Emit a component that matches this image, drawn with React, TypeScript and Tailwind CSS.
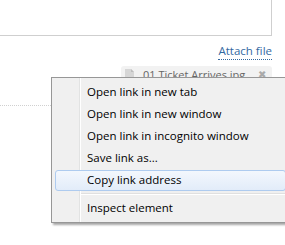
import React from 'react';

const items = [
  'Open link in new tab',
  'Open link in new window',
  'Open link in incognito window',
  'Save link as...',
];

const MenuItem = ({ label, active }: { label: string; active?: boolean }) => (
  <div className="relative h-[22px] flex items-center">
    {active && (
      <div className="absolute left-[3px] right-[4px] top-[1px] bottom-0 rounded-[3px] border border-[#aecbef] bg-gradient-to-b from-[#f3f7fd] to-[#e2ecf9]" />
    )}
    <span className="relative pl-[35px]">{label}</span>
  </div>
);

const App = () => {
  return (
    <div className="relative w-[285px] h-[245px] overflow-hidden bg-white font-['Open_Sans',sans-serif] text-[11.5px]">
      {/* Textarea */}
      <div className="-ml-[2px] -mt-[2px] w-[274px] h-[38px] border border-[#cfcfcf]" />

      {/* Attach link */}
      <div className="flex justify-end w-[272px] mt-[8px]">
        <a className="text-[#33689f] text-[11.5px] leading-[14px] border-b border-dotted border-[#33689f] pb-[1px]">Attach file</a>
      </div>

      {/* Attachment chip */}
      <div className="ml-[121px] mt-[6px] w-[151px] h-[24px] rounded-[3px] bg-[#f2f2f2] flex items-start pt-[2px] pl-[4px] text-[#666] text-[11px]">
        <svg width="9" height="11" viewBox="0 0 9 11" className="mt-[1px]">
          <path d="M0 0h6l3 3v8H0z" fill="#d6d6d6" />
          <path d="M6 0v3h3" fill="#bdbdbd" />
        </svg>
        <span className="ml-[9px] leading-[13px]">01 Ticket Arrives.jpg</span>
        <span className="ml-auto mr-[6px] text-[#aaa] text-[10px] leading-[13px]">✖</span>
      </div>

      {/* Dotted divider */}
      <div className="mt-[15px] w-[55px] border-t border-dotted border-[#d0d0d0]" />

      {/* Context menu */}
      <div className="absolute left-[51px] top-[77px] w-[240px] h-[146px] bg-[#f0f0f0] border border-[#979797] shadow-[2px_2px_2px_rgba(0,0,0,0.35)] pt-[3px] text-black">
        <div className="absolute top-0 bottom-0 left-[27px] w-[2px] border-l border-[#e2e3e3] border-r-white border-r" />
        {items.map((l) => (
          <MenuItem key={l} label={l} />
        ))}
        <MenuItem label="Copy link address" active />
        <div className="h-[6px] flex items-center pl-[29px]">
          <div className="w-full h-[2px] border-t border-[#e0e0e0] border-b border-b-white" />
        </div>
        <MenuItem label="Inspect element" />
      </div>
    </div>
  );
};

export default App;
